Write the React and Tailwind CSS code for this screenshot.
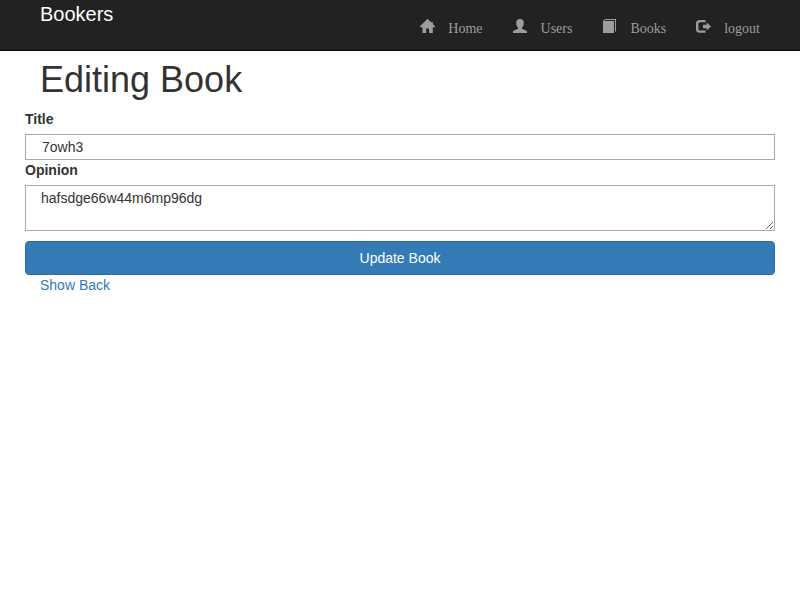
export default function App() {
  const items = [
    ['Home', 'M7.500 -0.300 11.500 3.500V3H12.800V4.900L15 7.300V8.300H12.800V14H9V9.500H6.200V14H2.500V8.300H0V7.300Z'],
    ['Users', 'M7 0C9.400 0 10.800 1.600 10.800 4C10.800 6 10 7.600 9 8.700V9.700C9.500 10.500 14 11 14 13V14H0V13C0 11 4.500 10.500 5 9.700V8.700C4 7.600 3.200 6 3.200 4C3.200 1.600 4.600 0 7 0Z'],
    ['Books', 'M3 0H14V12L13 13V1H3L2 2H12V14H1V2Z'],
    ['logout', 'M9.500 1H3.700Q0 1 0 4.500V10.200Q0 13.700 3.700 13.700H9.500V11.400H4Q2.400 11.400 2.400 9.900V4.800Q2.400 3.300 4 3.300H9.500ZM10.700 3.500 15 7.500 10.700 11.500V9.300H7V5.700H10.700Z'],
  ];
  return (
    <div className="h-[600px] w-[800px] overflow-hidden bg-white font-['Liberation_Sans',sans-serif] text-sm leading-5 text-[#333]">
      <header className="flex h-[51px] justify-between border-b border-[#080808] bg-[#222] px-10">
        <a className="pt-1 text-xl leading-5 text-white">Bookers</a>
        <nav className="flex gap-[30px] pt-[19px] font-['Liberation_Serif',serif] text-[#9d9d9d]">
          {items.map(([label, d]) => (
            <a key={label} className="flex h-5">
              <svg className="mr-[13px] h-[15px] w-[15px] overflow-visible" viewBox="0 0 15 15" fill="currentColor"><path d={d} /></svg>
              {label}
            </a>
          ))}
        </nav>
      </header>
      <h1 className="mt-[9px] px-10 text-4xl leading-[40px]">Editing Book</h1>
      <form className="mt-[9px] px-[25px]">
        <label className="mb-[5px] block font-bold">Title</label>
        <input className="block h-[26px] w-full border border-[#a9a9a9] px-4 outline-none" defaultValue="7owh3" />
        <label className="mb-[5px] block font-bold">Opinion</label>
        <textarea className="block h-[46px] w-full border border-[#a9a9a9] px-[15px] py-[2px] outline-none" defaultValue="hafsdge66w44m6mp96dg" />
        <button type="button" className="mt-[10px] block h-[34px] w-full rounded border border-[#2e6da4] bg-[#337ab7] text-white">Update Book</button>
      </form>
      <div className="px-10 text-[#337ab7]"><a>Show</a> <a>Back</a></div>
    </div>
  );
}
